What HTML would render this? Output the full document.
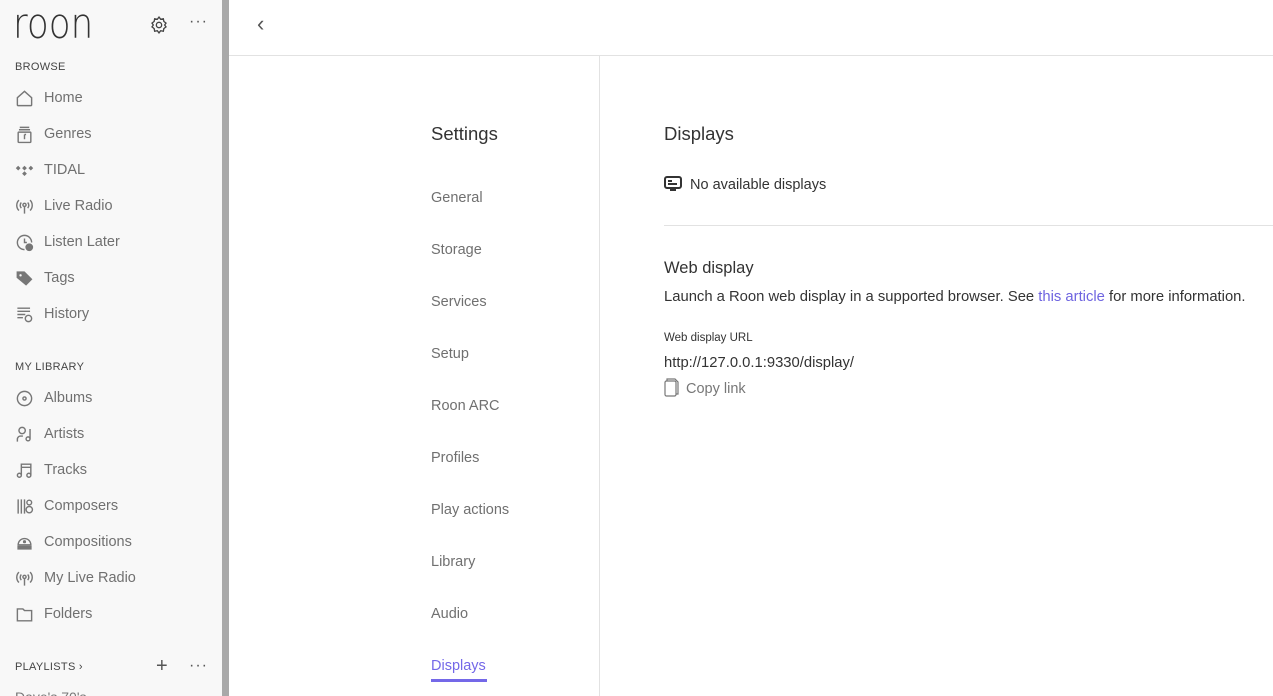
<!DOCTYPE html>
<html><head><meta charset="utf-8"><style>
*{margin:0;padding:0;box-sizing:border-box}
html,body{width:1273px;height:696px;overflow:hidden}
body{background:#fff;font-family:"Liberation Sans",sans-serif;position:relative}
.sb{position:absolute;left:0;top:0;width:222px;height:696px;background:#f8f8f8;overflow:hidden}
.sc{position:absolute;left:222px;top:0;width:7px;height:696px;background:#a9a9a9}
.a{position:absolute;white-space:nowrap}
.sec{font-size:11px;color:#444;letter-spacing:.3px}
.ni{position:absolute;left:15px;font-size:14.5px;color:#707070;height:20px;display:flex;align-items:center}
.ni svg{width:19px;height:19px;margin-right:10px;flex:none}
.sm{position:absolute;left:431px;font-size:14.5px;color:#707070}
</style></head><body>
<div class="sb">
<div class="a" style="left:13px;top:3px;font-size:42px;line-height:42px;color:#333;font-weight:200;font-family:'DejaVu Sans',sans-serif;transform:scaleX(.85);transform-origin:left">roon</div>
<svg class="a" style="left:149px;top:15px" width="20" height="20" viewBox="0 0 24 24" fill="none" stroke="#444" stroke-width="1.6"><circle cx="12" cy="12" r="3.2"/><path d="M12 2.5l2 2.6 3.2-.6.6 3.2 2.6 2-1.6 2.3 1.6 2.3-2.6 2-.6 3.2-3.2-.6-2 2.6-2-2.6-3.2.6-.6-3.2-2.6-2 1.6-2.3-1.6-2.3 2.6-2 .6-3.2 3.2.6z"/></svg>
<div class="a" style="left:189px;top:13px;font-size:16px;color:#555;letter-spacing:1px">···</div>
<div class="a sec" style="left:15px;top:61px">BROWSE</div>
<div class="ni" style="top:88px"><svg viewBox="0 0 24 24" fill="none" stroke="#777" stroke-width="1.8"><path d="M3 11l9-8 9 8v9a1 1 0 0 1-1 1H4a1 1 0 0 1-1-1z"/></svg>Home</div>
<div class="ni" style="top:124px"><svg viewBox="0 0 24 24" fill="none" stroke="#777" stroke-width="1.8"><path d="M6 3h12M5 6h14"/><rect x="4" y="9" width="16" height="13" rx="1"/><path d="M12 12v6M12 12h2"/></svg>Genres</div>
<div class="ni" style="top:160px"><svg viewBox="0 0 24 24" fill="#777"><path d="M4 6l3 3-3 3-3-3zM12 6l3 3-3 3-3-3zM20 6l3 3-3 3-3-3zM12 13l3 3-3 3-3-3z"/></svg>TIDAL</div>
<div class="ni" style="top:196px"><svg viewBox="0 0 24 24" fill="none" stroke="#777" stroke-width="1.8"><circle cx="12" cy="10" r="2"/><path d="M12 12v9M8 7a5 5 0 0 0 0 7M16 7a5 5 0 0 1 0 7M5 4a9 9 0 0 0 0 13M19 4a9 9 0 0 1 0 13"/></svg>Live Radio</div>
<div class="ni" style="top:232px"><svg viewBox="0 0 24 24" fill="none" stroke="#777" stroke-width="1.8"><path d="M12 21a9 9 0 1 1 9-9"/><path d="M12 7v5h3"/><circle cx="18" cy="18" r="4" fill="#777"/></svg>Listen Later</div>
<div class="ni" style="top:268px"><svg viewBox="0 0 24 24" fill="#777"><path d="M2 3h10l10 10-8 8L2 11z"/><circle cx="7" cy="8" r="1.5" fill="#f8f8f8"/></svg>Tags</div>
<div class="ni" style="top:304px"><svg viewBox="0 0 24 24" fill="none" stroke="#777" stroke-width="1.8"><path d="M3 4h16M3 8h16M3 12h10M3 16h7"/><circle cx="17" cy="17" r="4"/></svg>History</div>
<div class="a sec" style="left:15px;top:361px">MY LIBRARY</div>
<div class="ni" style="top:388px"><svg viewBox="0 0 24 24" fill="none" stroke="#777" stroke-width="1.8"><circle cx="12" cy="12" r="9"/><circle cx="12" cy="12" r="2"/></svg>Albums</div>
<div class="ni" style="top:424px"><svg viewBox="0 0 24 24" fill="none" stroke="#777" stroke-width="1.8"><circle cx="9" cy="7" r="4"/><path d="M3 21v-3a4 4 0 0 1 4-4h3M19 5v12"/><circle cx="16.5" cy="17.5" r="2.5"/></svg>Artists</div>
<div class="ni" style="top:460px"><svg viewBox="0 0 24 24" fill="none" stroke="#777" stroke-width="1.8"><path d="M8 18V4h12v14M8 8h12"/><circle cx="5.5" cy="18" r="2.5"/><circle cx="17.5" cy="18" r="2.5"/></svg>Tracks</div>
<div class="ni" style="top:496px"><svg viewBox="0 0 24 24" fill="none" stroke="#777" stroke-width="1.8"><path d="M4 3v18M8 3v18M12 3v18"/><circle cx="18" cy="7" r="3"/><circle cx="18" cy="16" r="4"/></svg>Composers</div>
<div class="ni" style="top:532px"><svg viewBox="0 0 24 24" fill="#777"><path d="M4 15a8 8 0 0 1 16 0z" fill="none" stroke="#777" stroke-width="1.8"/><rect x="3" y="16" width="18" height="5"/><circle cx="12" cy="11" r="2"/></svg>Compositions</div>
<div class="ni" style="top:568px"><svg viewBox="0 0 24 24" fill="none" stroke="#777" stroke-width="1.8"><circle cx="12" cy="10" r="2"/><path d="M12 12v9M8 7a5 5 0 0 0 0 7M16 7a5 5 0 0 1 0 7M5 4a9 9 0 0 0 0 13M19 4a9 9 0 0 1 0 13"/></svg>My Live Radio</div>
<div class="ni" style="top:604px"><svg viewBox="0 0 24 24" fill="none" stroke="#777" stroke-width="1.8"><path d="M3 5h7l2 2h9v13H3z"/></svg>Folders</div>
<div class="a sec" style="left:15px;top:661px">PLAYLISTS ›</div>
<div class="a" style="left:156px;top:655px;font-size:20px;color:#555">+</div>
<div class="a" style="left:189px;top:657px;font-size:16px;color:#555;letter-spacing:1px">···</div>
<div class="a" style="left:15px;top:689px;font-size:14px;color:#777">Dave's 70's</div>
</div>
<div class="sc"></div>
<div class="a" style="left:257px;top:11px;font-size:22px;color:#555;font-weight:300">‹</div>
<div class="a" style="left:229px;top:55px;width:1044px;height:1px;background:#e2e2e2"></div>
<div class="a" style="left:599px;top:56px;width:1px;height:640px;background:#e2e2e2"></div>
<div class="a" style="left:431px;top:123px;font-size:18.5px;color:#333">Settings</div>
<div class="sm" style="top:190px">General</div>
<div class="sm" style="top:242px">Storage</div>
<div class="sm" style="top:294px">Services</div>
<div class="sm" style="top:346px">Setup</div>
<div class="sm" style="top:398px">Roon ARC</div>
<div class="sm" style="top:450px">Profiles</div>
<div class="sm" style="top:502px">Play actions</div>
<div class="sm" style="top:554px">Library</div>
<div class="sm" style="top:606px">Audio</div>
<div class="sm" style="top:658px;color:#7468e8">Displays</div>
<div class="a" style="left:431px;top:679px;width:56px;height:3px;background:#7468e8"></div>
<div class="a" style="left:664px;top:123px;font-size:18.5px;color:#333">Displays</div>
<svg class="a" style="left:664px;top:176px" width="18" height="16" viewBox="0 0 18 16"><rect x="1" y="1" width="16" height="11" rx="2" fill="none" stroke="#333" stroke-width="2"/><rect x="4" y="4" width="4" height="2" fill="#333"/><rect x="4" y="7" width="9" height="2" fill="#333"/><rect x="6" y="12" width="6" height="3" fill="#333"/></svg>
<div class="a" style="left:690px;top:177px;font-size:14.5px;color:#333">No available displays</div>
<div class="a" style="left:664px;top:225px;width:609px;height:1px;background:#e2e2e2"></div>
<div class="a" style="left:664px;top:259px;font-size:16.5px;color:#333">Web display</div>
<div class="a" style="left:664px;top:289px;font-size:14.8px;color:#333">Launch a Roon web display in a supported browser. See <span style="color:#6e64e0">this article</span> for more information.</div>
<div class="a" style="left:664px;top:332px;font-size:11.5px;color:#333">Web display URL</div>
<div class="a" style="left:664px;top:355px;font-size:14.8px;color:#333">http://127.0.0.1:9330/display/</div>
<svg class="a" style="left:664px;top:378px" width="15" height="19" viewBox="0 0 15 19" fill="none" stroke="#777" stroke-width="1.2"><path d="M3 3V1h8l3 3v12h-2"/><rect x="1" y="3" width="11" height="15" rx="1.5"/></svg>
<div class="a" style="left:686px;top:381px;font-size:14.5px;color:#777">Copy link</div>
</body></html>
